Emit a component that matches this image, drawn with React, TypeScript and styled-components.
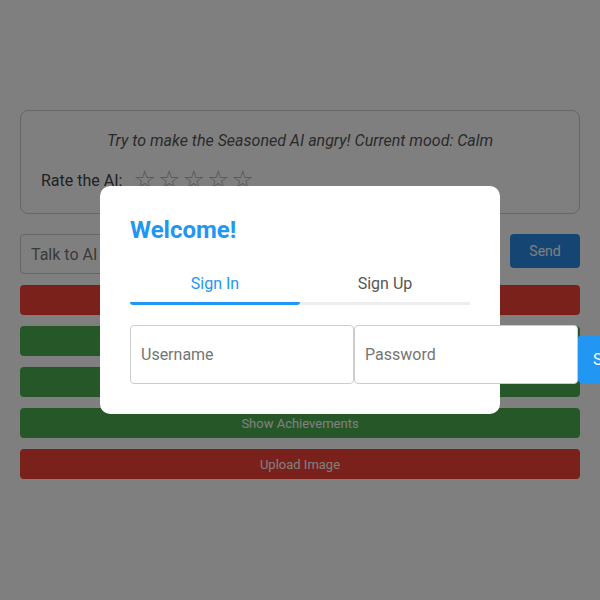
import React from "react";
import styled, { createGlobalStyle } from "styled-components";

const Global = createGlobalStyle`
  html, body { margin: 0; padding: 0; background: #fff; }
  body { font-family: Roboto, "Liberation Sans", Arial, sans-serif; }
  * { box-sizing: border-box; }
`;

const Page = styled.div`
  padding: 110px 20px 20px;
  display: flex;
  flex-direction: column;
`;

const MoodCard = styled.div`
  border: 1px solid #ccc;
  border-radius: 8px;
  padding: 20px 20px 20px;
  display: flex;
  flex-direction: column;
  gap: 16px;
`;

const MoodText = styled.p`
  margin: 0;
  text-align: center;
  font-style: italic;
  font-size: 16px;
  line-height: 20px;
  color: #555;
`;

const RateRow = styled.div`
  display: flex;
  align-items: center;
  gap: 10px;
  font-size: 16px;
  color: #444;
`;

const Stars = styled.div`
  display: flex;
`;

const Star = styled.span`
  font-size: 25px;
  line-height: 26px;
  color: #aaa;
  font-family: "DejaVu Sans", sans-serif;
  width: 24.5px;
  text-align: center;
`;

const ChatRow = styled.div`
  display: flex;
  gap: 10px;
  margin-top: 20px;
  align-items: flex-start;
`;

const ChatInput = styled.input`
  flex: 1;
  height: 40px;
  border: 1px solid #ccc;
  border-radius: 4px;
  padding: 0 10px;
  font-size: 16px;
  font-family: inherit;
  &::placeholder { color: #757575; }
`;

const SendButton = styled.button`
  width: 70px;
  height: 34px;
  border: none;
  border-radius: 4px;
  background: #2a8ce6;
  color: #fff;
  font-size: 14px;
  font-family: inherit;
`;

const ActionButton = styled.button<{ $tone: "red" | "green" }>`
  margin-top: 11px;
  width: 100%;
  height: 30px;
  border: none;
  border-radius: 4px;
  background: ${(p) => (p.$tone === "red" ? "#f44336" : "#4caf50")};
  color: #fff;
  font-size: 13px;
  font-family: inherit;
`;

const Overlay = styled.div`
  position: fixed;
  inset: 0;
  background: rgba(0, 0, 0, 0.5);
  display: flex;
  align-items: center;
  justify-content: center;
`;

const Modal = styled.div`
  width: 400px;
  background: #fff;
  border-radius: 10px;
  padding: 30px;
  display: flex;
  flex-direction: column;
`;

const Heading = styled.h2`
  margin: 0;
  font-size: 24px;
  line-height: 28px;
  font-weight: 700;
  color: #2196f3;
`;

const Tabs = styled.div`
  display: flex;
  margin-top: 20px;
`;

const Tab = styled.div<{ $active?: boolean }>`
  flex: 1;
  text-align: center;
  font-size: 16px;
  line-height: 19px;
  padding: 10px 0 9px;
  color: ${(p) => (p.$active ? "#2196f3" : "#555")};
  border-bottom: 3px solid ${(p) => (p.$active ? "#2196f3" : "#eee")};
  border-radius: ${(p) => (p.$active ? "0 0 3px 3px" : "0")};
`;

const Form = styled.div`
  display: flex;
  align-items: flex-end;
  margin-top: 20px;
`;

const Field = styled.input`
  flex: 0 0 224px;
  width: 224px;
  height: 59px;
  border: 1px solid #ccc;
  border-radius: 4px;
  padding: 0 10px;
  font-size: 16px;
  font-family: inherit;
  &::placeholder { color: #757575; }
`;

const SubmitButton = styled.button`
  flex: 0 0 auto;
  height: 48px;
  margin-bottom: 1px;
  padding: 0 15px;
  border: none;
  border-radius: 4px;
  background: #2196f3;
  color: #fff;
  font-size: 16px;
  font-family: inherit;
`;

export default function App() {
  return (
    <>
      <Global />
      <Page>
        <MoodCard>
          <MoodText>Try to make the Seasoned AI angry! Current mood: Calm</MoodText>
          <RateRow>
            <span>Rate the AI:</span>
            <Stars>
              {[0, 1, 2, 3, 4].map((i) => (
                <Star key={i}>☆</Star>
              ))}
            </Stars>
          </RateRow>
        </MoodCard>
        <ChatRow>
          <ChatInput placeholder="Talk to AI" />
          <SendButton>Send</SendButton>
        </ChatRow>
        <ActionButton $tone="red">Reset Mood</ActionButton>
        <ActionButton $tone="green">Show Stats</ActionButton>
        <ActionButton $tone="green">Show Leaderboard</ActionButton>
        <ActionButton $tone="green">Show Achievements</ActionButton>
        <ActionButton $tone="red">Upload Image</ActionButton>
      </Page>
      <Overlay>
        <Modal>
          <Heading>Welcome!</Heading>
          <Tabs>
            <Tab $active>Sign In</Tab>
            <Tab>Sign Up</Tab>
          </Tabs>
          <Form>
            <Field placeholder="Username" />
            <Field placeholder="Password" type="password" />
            <SubmitButton>Sign In</SubmitButton>
          </Form>
        </Modal>
      </Overlay>
    </>
  );
}
